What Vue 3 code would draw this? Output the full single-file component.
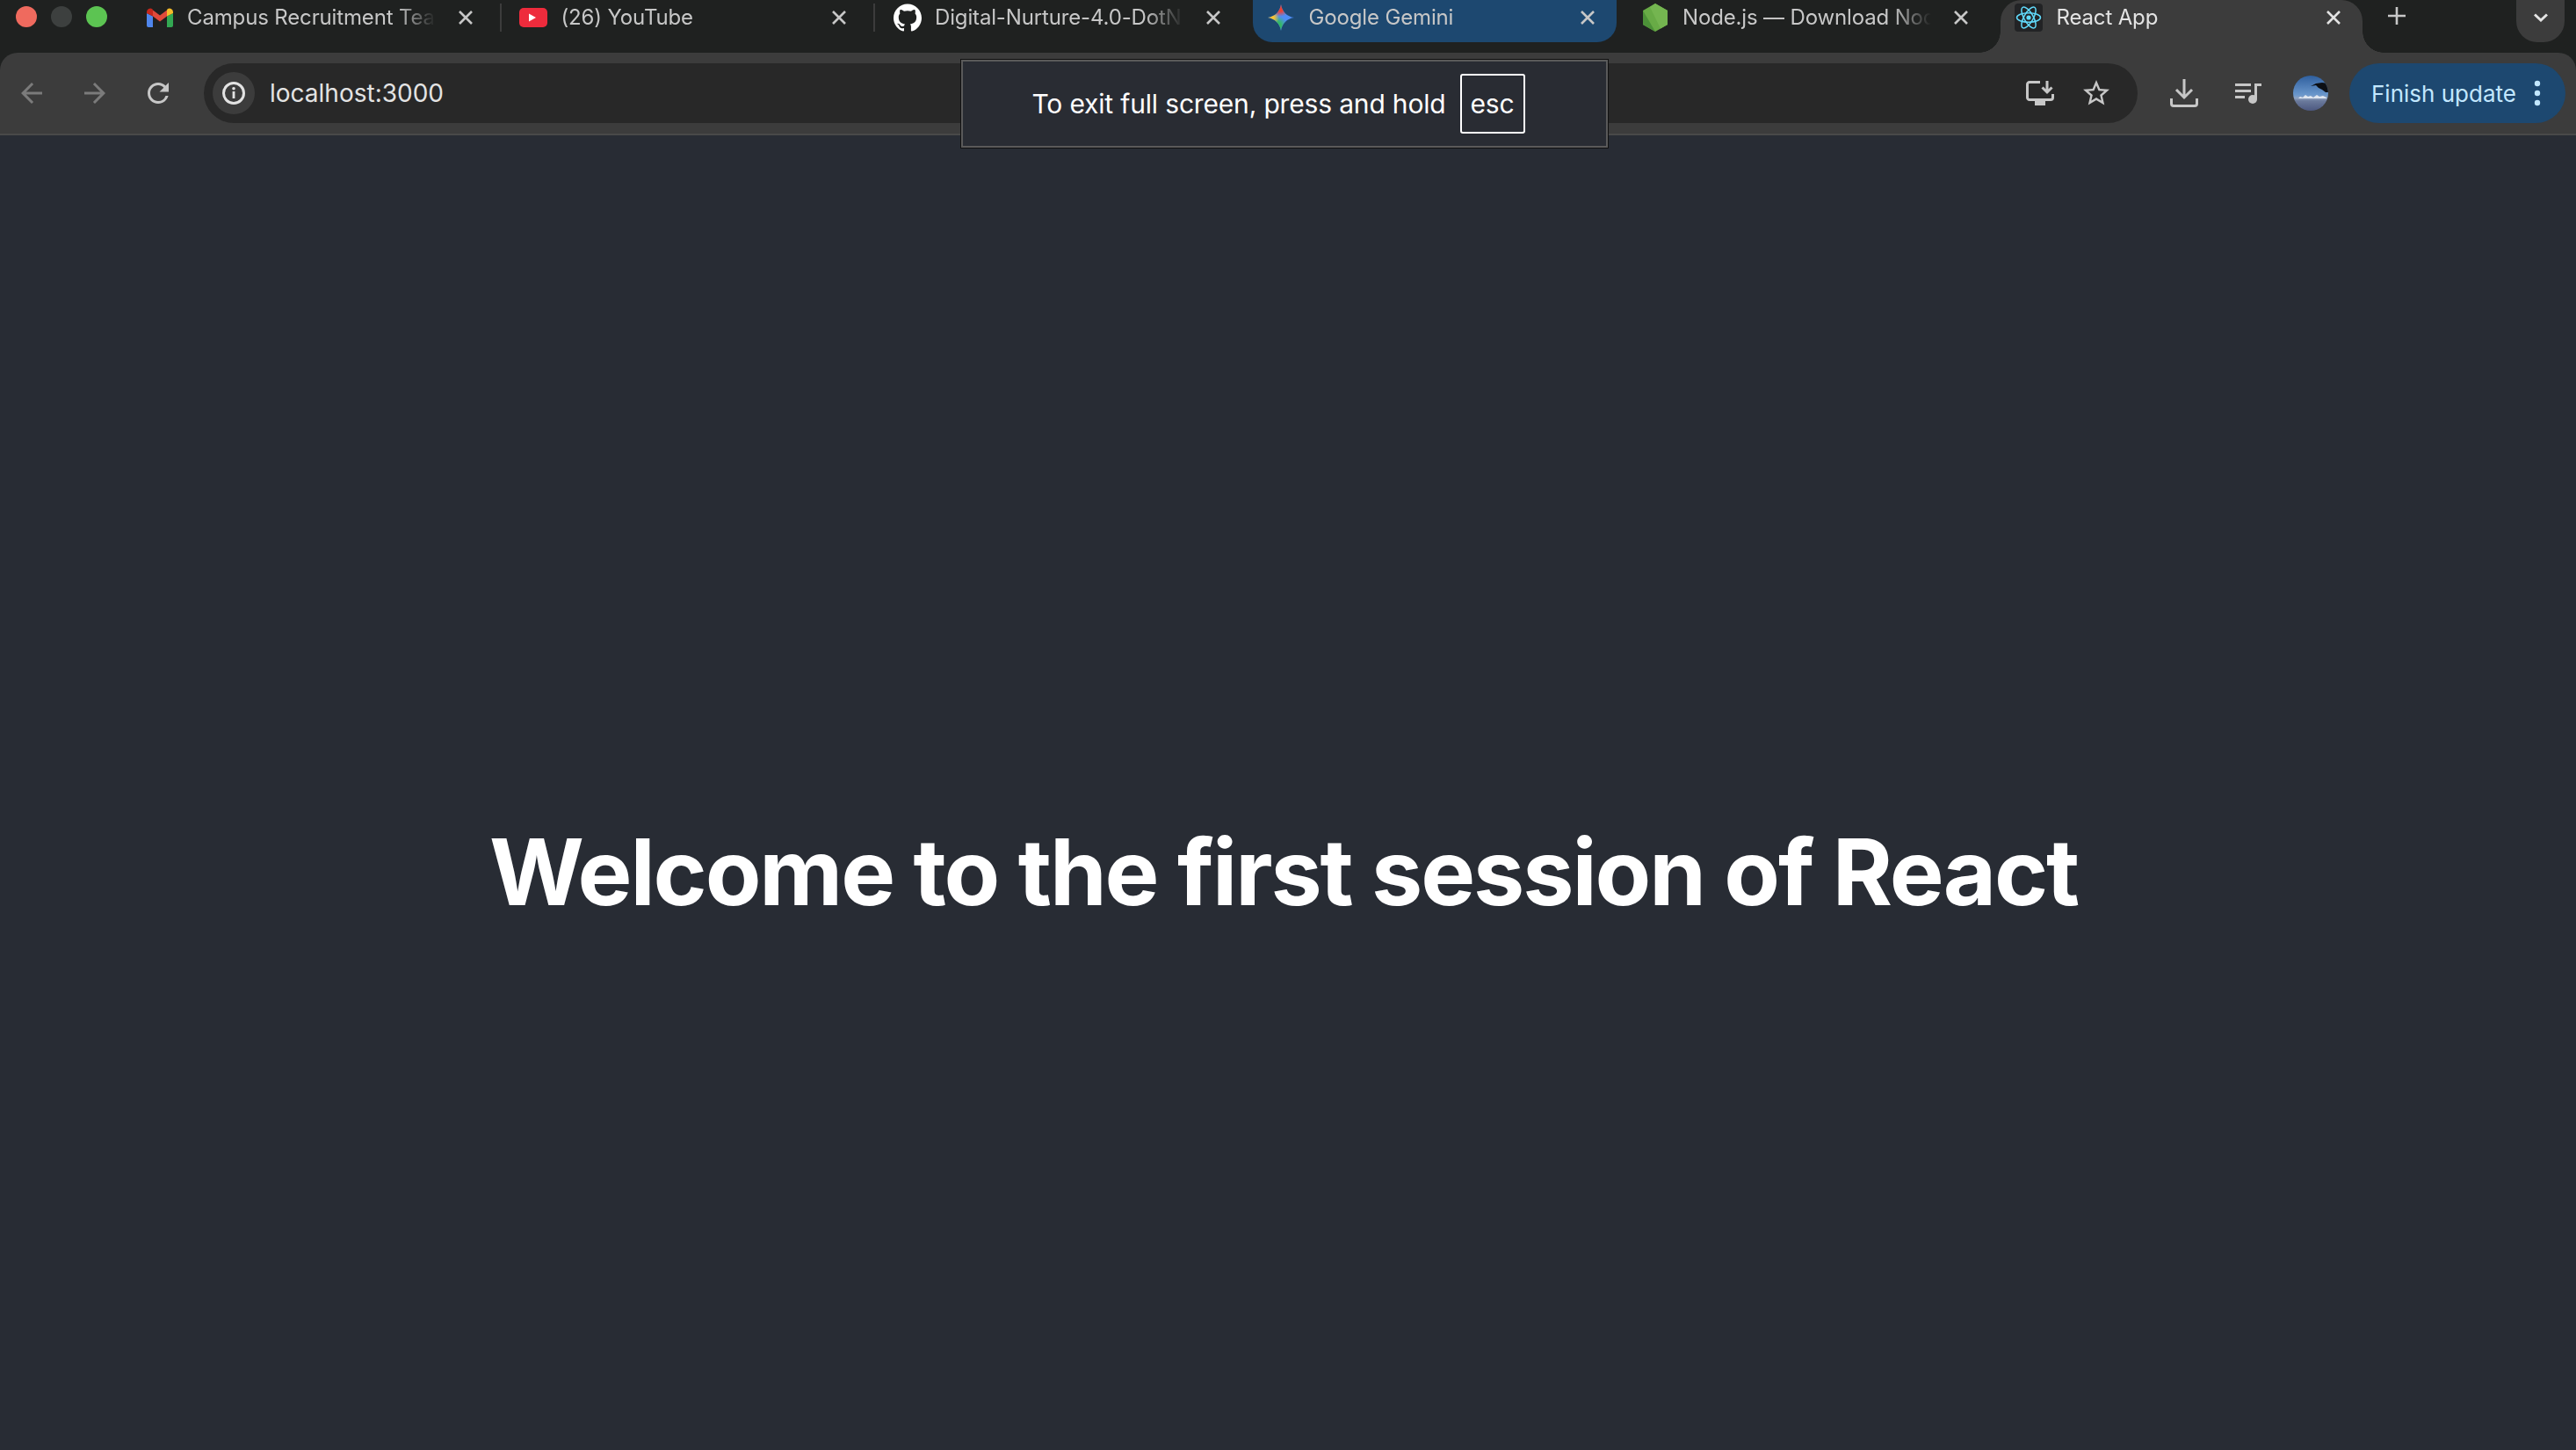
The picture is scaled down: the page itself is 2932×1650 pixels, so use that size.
<template>
  <div class="window">
    <header class="tabstrip">
      <div class="traffic">
        <span class="light red"></span>
        <span class="light grey"></span>
        <span class="light green"></span>
      </div>
      <div
        v-for="tab in tabs"
        :key="tab.title"
        class="tab"
        :class="{ highlighted: tab.kind === 'gemini', active: tab.kind === 'react', sep: tab.sep }"
      >
        <span class="favicon">
          <svg v-if="tab.kind === 'gmail'" width="30" height="22" viewBox="0 0 30 22">
            <path d="M0 6v14a2 2 0 0 0 2 2h5V9.500z" fill="#4f86ec" />
            <path d="M23 9.500V22h5a2 2 0 0 0 2-2V6z" fill="#33a852" />
            <path d="M7 9.500l8 6 8-6V2.500l-8 6-8-6z" fill="#e04a3b" />
            <path d="M0 6V4.500A4 4 0 0 1 6.400 1.300L7 2.500v7z" fill="#c5281c" />
            <path d="M23 9.500v-7l.6-1.200A4 4 0 0 1 30 4.500V6z" fill="#f6bb2a" />
          </svg>
          <svg v-else-if="tab.kind === 'youtube'" width="32" height="22" viewBox="0 0 32 22">
            <rect width="32" height="22" rx="5" fill="#ee2b3c" />
            <path d="M11 6.500l8 4.500-8 4.500z" fill="#fff" />
          </svg>
          <svg v-else-if="tab.kind === 'github'" width="32" height="32" viewBox="0 0 24 24">
            <path fill="#fff" d="M12 .297c-6.630 0-12 5.373-12 12 0 5.303 3.438 9.800 8.205 11.385.6.113.82-.258.82-.577 0-.285-.01-1.040-.015-2.040-3.338.724-4.042-1.610-4.042-1.610C4.422 18.070 3.633 17.700 3.633 17.700c-1.087-.744.084-.729.084-.729 1.205.084 1.838 1.236 1.838 1.236 1.070 1.835 2.809 1.305 3.495.998.108-.776.417-1.305.76-1.605-2.665-.3-5.466-1.332-5.466-5.930 0-1.310.465-2.380 1.235-3.220-.135-.303-.54-1.523.105-3.176 0 0 1.005-.322 3.300 1.230.96-.267 1.980-.399 3-.405 1.020.006 2.040.138 3 .405 2.280-1.552 3.285-1.230 3.285-1.230.645 1.653.24 2.873.12 3.176.765.84 1.230 1.910 1.230 3.220 0 4.610-2.805 5.625-5.475 5.920.42.36.81 1.096.81 2.220 0 1.606-.015 2.896-.015 3.286 0 .315.21.69.825.57C20.565 22.092 24 17.592 24 12.297c0-6.627-5.373-12-12-12" />
          </svg>
          <svg v-else-if="tab.kind === 'gemini'" width="32" height="32" viewBox="0 0 32 32">
            <defs>
              <clipPath id="gemStar">
                <path d="M16 1C17 9 23 15 31 16C23 17 17 23 16 31C15 23 9 17 1 16C9 15 15 9 16 1Z" />
              </clipPath>
              <radialGradient id="gemRed"><stop offset="0.45" stop-color="#ea4335" /><stop offset="1" stop-color="#ea4335" stop-opacity="0" /></radialGradient>
              <radialGradient id="gemYellow"><stop offset="0.4" stop-color="#f9c22e" /><stop offset="1" stop-color="#f9c22e" stop-opacity="0" /></radialGradient>
              <radialGradient id="gemGreen"><stop offset="0.35" stop-color="#34b864" /><stop offset="1" stop-color="#34b864" stop-opacity="0" /></radialGradient>
            </defs>
            <g clip-path="url(#gemStar)">
              <rect width="32" height="32" fill="#4f8df5" />
              <circle cx="12" cy="25" r="11" fill="url(#gemGreen)" />
              <circle cx="4" cy="16" r="10" fill="url(#gemYellow)" />
              <circle cx="15" cy="4" r="11" fill="url(#gemRed)" />
            </g>
          </svg>
          <svg v-else-if="tab.kind === 'node'" width="28" height="32" viewBox="0 0 28 32">
            <path d="M14 0l14 8v16l-14 8-14-8V8z" fill="#68ab46" />
            <path d="M0 8l14 24-14-8z" fill="#4c9138" />
            <path d="M14 0l14 8v16l-8 4.600L8 4z" fill="#74b550" />
          </svg>
          <svg v-else width="32" height="32" viewBox="0 0 32 32">
            <rect width="32" height="32" rx="4" fill="#222325" />
            <g fill="none" stroke="#61dafb" stroke-width="1.500">
              <ellipse cx="16" cy="16" rx="13.500" ry="5.200" />
              <ellipse cx="16" cy="16" rx="13.500" ry="5.200" transform="rotate(60 16 16)" />
              <ellipse cx="16" cy="16" rx="13.500" ry="5.200" transform="rotate(120 16 16)" />
            </g>
            <circle cx="16" cy="16" r="2.600" fill="#61dafb" />
          </svg>
        </span>
        <span class="tab-title">{{ tab.title }}</span>
        <svg class="tab-close" width="32" height="32" viewBox="0 0 32 32">
          <path d="M9 9l14 14M23 9L9 23" />
        </svg>
      </div>
      <svg class="new-tab" width="20" height="20" viewBox="0 0 20 20">
        <path d="M10 0v20M0 10h20" />
      </svg>
      <div class="tab-search">
        <svg width="16" height="10" viewBox="0 0 16 10">
          <path d="M1 1.500l7 6.500 7-6.500" />
        </svg>
      </div>
    </header>

    <nav class="toolbar">
      <svg class="nav-icon dim" width="36" height="36" viewBox="0 0 24 24">
        <path d="M20 11H7.830l5.590-5.590L12 4l-8 8 8 8 1.410-1.410L7.830 13H20v-2z" />
      </svg>
      <svg class="nav-icon dim" width="36" height="36" viewBox="0 0 24 24">
        <path d="M12 4l-1.410 1.410L16.170 11H4v2h12.170l-5.580 5.590L12 20l8-8z" />
      </svg>
      <svg class="nav-icon" width="36" height="36" viewBox="0 0 24 24">
        <path d="M17.650 6.350A7.958 7.958 0 0 0 12 4c-4.420 0-7.990 3.580-7.990 8s3.570 8 7.990 8c3.730 0 6.840-2.550 7.730-6h-2.080A5.990 5.990 0 0 1 12 18c-3.310 0-6-2.690-6-6s2.690-6 6-6c1.660 0 3.140.690 4.220 1.780L13 11h7V4l-2.350 2.350z" />
      </svg>

      <div class="omnibox">
        <span class="site-chip">
          <svg width="28" height="28" viewBox="0 0 28 28">
            <circle cx="14" cy="14" r="11.500" fill="none" stroke="#e3e3e3" stroke-width="3" />
            <circle cx="14" cy="8.800" r="1.800" fill="#e3e3e3" />
            <rect x="12.600" y="12" width="2.800" height="8" fill="#e3e3e3" />
          </svg>
        </span>
        <span class="url">localhost:3000</span>
        <svg class="install" width="32" height="28" viewBox="0 0 32 28" fill="none" stroke="#c7c7c7" stroke-width="3">
          <path d="M16 1.500H4a2.500 2.500 0 0 0-2.500 2.500v15A2.500 2.500 0 0 0 4 21.500h24a2.500 2.500 0 0 0 2.500-2.500v-4" />
          <path d="M24 0v12M18.500 7.500l5.500 5.500 5.500-5.500" />
          <rect x="10" y="23" width="12" height="5" fill="#c7c7c7" stroke="none" />
        </svg>
        <svg class="star" width="36" height="36" viewBox="0 0 24 24">
          <path d="M22 9.240l-7.190-.620L12 2 9.190 8.630 2 9.240l5.460 4.730L5.820 21 12 17.270 18.180 21l-1.630-7.030L22 9.240zM12 15.400l-3.760 2.270 1-4.280-3.320-2.880 4.380-.380L12 6.100l1.710 4.040 4.380.380-3.320 2.880 1 4.280L12 15.400z" />
        </svg>
      </div>

      <svg class="download" width="32" height="32" viewBox="0 0 32 32" fill="none" stroke="#c7c7c7" stroke-width="3">
        <path d="M16 0v20M7 12l9 9 9-9" />
        <path d="M1.500 22v6a2.500 2.500 0 0 0 2.500 2.500h24a2.500 2.500 0 0 0 2.500-2.500v-6" />
      </svg>
      <svg class="media" width="30" height="24" viewBox="0 0 30 24" fill="#c7c7c7">
        <rect y="1" width="18" height="3" />
        <rect y="8" width="18" height="3" />
        <rect y="15" width="11" height="3" />
        <path d="M22 1h8v3h-5v15h-3z" />
        <circle cx="20" cy="19" r="5" />
      </svg>
      <svg class="avatar" width="40" height="40" viewBox="0 0 40 40">
        <defs>
          <clipPath id="avatarClip"><circle cx="20" cy="20" r="20" /></clipPath>
          <linearGradient id="avatarSky" x1="0" y1="0" x2="0" y2="1">
            <stop offset="0" stop-color="#2f5f9e" />
            <stop offset="0.55" stop-color="#6a97cc" />
            <stop offset="0.64" stop-color="#8fa3c2" />
            <stop offset="0.72" stop-color="#6b7a9c" />
            <stop offset="1" stop-color="#4c5880" />
          </linearGradient>
        </defs>
        <g clip-path="url(#avatarClip)">
          <rect width="40" height="40" fill="url(#avatarSky)" />
          <path d="M6 26l2-2 3 1 3-3 3 2 3-1 3 2 4-3 3 2 4-1 4 2v1H6z" fill="#dfe6f0" />
          <path d="M20 12l6-3 7-1 7 1v10l-3 0-4-3-4-2-3-3z" fill="#0c0f14" />
        </g>
      </svg>
      <div class="update-pill">
        <span>Finish update</span>
        <svg width="8" height="30" viewBox="0 0 8 30" fill="#c2e7ff">
          <circle cx="4" cy="4" r="3.200" />
          <circle cx="4" cy="15" r="3.200" />
          <circle cx="4" cy="26" r="3.200" />
        </svg>
      </div>
    </nav>

    <main class="page">
      <h1>Welcome to the first session of React</h1>
    </main>

    <div class="fullscreen-toast">
      <span>To exit full screen, press and hold</span>
      <kbd>esc</kbd>
    </div>
  </div>
</template>

<script setup>
const tabs = [
  { kind: 'gmail', title: 'Campus Recruitment Tea', sep: true },
  { kind: 'youtube', title: '(26) YouTube', sep: true },
  { kind: 'github', title: 'Digital-Nurture-4.0-DotN' },
  { kind: 'gemini', title: 'Google Gemini' },
  { kind: 'node', title: 'Node.js — Download Nod' },
  { kind: 'react', title: 'React App' }
]
</script>

<style>
html, body {
  margin: 0;
  background: #282c34;
}
</style>

<style scoped>
.window {
  position: relative;
  width: 2932px;
  height: 1650px;
  display: flex;
  flex-direction: column;
  overflow: hidden;
  background: #1f2120;
  font-family: Inter, "Liberation Sans", sans-serif;
}

/* tab strip */
.tabstrip {
  height: 60px;
  flex: none;
  display: flex;
  align-items: flex-start;
}
.traffic {
  width: 149.500px;
  height: 38px;
  flex: none;
  display: flex;
  align-items: center;
  gap: 16px;
  padding-left: 18px;
  box-sizing: border-box;
}
.light {
  width: 24px;
  height: 24px;
  border-radius: 50%;
}
.light.red { background: #ef6a5e; }
.light.grey { background: #3d403f; }
.light.green { background: #5cc452; }

.tab {
  position: relative;
  width: 413px;
  height: 48px;
  margin-right: 12.500px;
  flex: none;
  display: flex;
  align-items: center;
  box-sizing: border-box;
  padding: 0 17px 8px 16px;
  color: #c7c7c7;
  font-size: 24px;
  letter-spacing: -0.15px;
  border-radius: 0 0 22px 22px;
}
.tab.sep::after {
  content: "";
  position: absolute;
  top: 4px;
  right: -8px;
  width: 2px;
  height: 32px;
  background: #3c3c3c;
}
.tab.highlighted {
  width: 414px;
  margin-right: 11.500px;
  background: #1d4870;
}
.tab.active {
  height: 60px;
  width: 412px;
  padding-bottom: 20px;
  margin-right: 0;
  background: #3c3c3c;
  color: #e3e3e3;
  border-radius: 24px 24px 0 0;
}
.tab.active::before,
.tab.active::after {
  content: "";
  position: absolute;
  bottom: 0;
  width: 24px;
  height: 24px;
}
.tab.active::before {
  left: -24px;
  background: radial-gradient(circle at 0 0, transparent 23.500px, #3c3c3c 24px);
}
.tab.active::after {
  right: -24px;
  background: radial-gradient(circle at 100% 0, transparent 23.500px, #3c3c3c 24px);
}
.favicon {
  width: 32px;
  height: 32px;
  flex: none;
  display: flex;
  align-items: center;
  justify-content: center;
  margin-right: 15.500px;
}
.tab-title {
  flex: 1;
  min-width: 0;
  margin-right: 12px;
  padding-bottom: 2px;
  white-space: nowrap;
  overflow: hidden;
  -webkit-mask-image: linear-gradient(to right, #000 calc(100% - 50px), transparent calc(100% - 6px));
  mask-image: linear-gradient(to right, #000 calc(100% - 50px), transparent calc(100% - 6px));
}
.tab-close {
  flex: none;
  fill: none;
  stroke: #c7c7c7;
  stroke-width: 2.600;
}
.tab.active .tab-close {
  stroke: #e3e3e3;
}
.new-tab {
  flex: none;
  margin: 8px 0 0 29px;
  fill: none;
  stroke: #c7c7c7;
  stroke-width: 2.600;
}
.tab-search {
  width: 55px;
  height: 48px;
  flex: none;
  margin-left: auto;
  margin-right: 13px;
  display: flex;
  align-items: center;
  justify-content: center;
  box-sizing: border-box;
  padding-bottom: 8px;
  background: #3c3c3c;
  border-radius: 0 0 24px 24px;
}
.tab-search svg {
  fill: none;
  stroke: #e3e3e3;
  stroke-width: 3;
}

/* toolbar */
.toolbar {
  height: 94px;
  flex: none;
  display: flex;
  align-items: center;
  box-sizing: border-box;
  padding: 0 12px 0 18px;
  background: #3c3c3c;
  border-bottom: 2px solid #494949;
  border-radius: 20px 20px 0 0;
}
.nav-icon {
  flex: none;
  margin-right: 36px;
  fill: #c7c7c7;
}
.nav-icon.dim {
  fill: #7b7b7b;
}
.nav-icon:nth-child(3) {
  margin-right: 34px;
}
.omnibox {
  flex: 1;
  height: 68px;
  display: flex;
  align-items: center;
  padding: 0 29px 0 10px;
  background: #282828;
  border-radius: 34px;
}
.site-chip {
  width: 48px;
  height: 48px;
  flex: none;
  display: flex;
  align-items: center;
  justify-content: center;
  border-radius: 50%;
  background: #3c3c3c;
}
.url {
  flex: 1;
  margin-left: 17px;
  color: #e3e3e3;
  font-size: 28px;
}
.install {
  flex: none;
  margin-right: 30px;
}
.star {
  flex: none;
  fill: #c7c7c7;
}
.download {
  flex: none;
  margin-left: 37px;
}
.media {
  flex: none;
  margin-left: 42px;
}
.avatar {
  flex: none;
  margin-left: 36px;
}
.update-pill {
  width: 246px;
  height: 68px;
  flex: none;
  margin-left: 24px;
  display: flex;
  align-items: center;
  justify-content: space-between;
  box-sizing: border-box;
  padding: 0 28px 0 25px;
  background: #1d4870;
  border-radius: 34px;
  color: #c2e7ff;
  font-size: 26px;
}

/* page */
.page {
  flex: 1;
  display: flex;
  align-items: center;
  justify-content: center;
  box-sizing: border-box;
  padding: 180px 10px 0 0;
  background: #282c34;
}
.page h1 {
  margin: 0;
  color: #fff;
  font-size: 104px;
  font-weight: 700;
  letter-spacing: -2.1px;
  line-height: 1.2;
  white-space: nowrap;
}

.fullscreen-toast {
  position: absolute;
  left: 1094px;
  top: 68px;
  width: 736px;
  height: 100px;
  display: flex;
  align-items: center;
  justify-content: center;
  gap: 16px;
  box-sizing: border-box;
  padding-right: 14px;
  background: #292c33;
  border: 2px solid #5a5a5a;
  box-shadow: 0 0 0 1px #111;
  color: #fff;
  font-size: 30px;
  letter-spacing: -0.17px;
}
.fullscreen-toast kbd {
  width: 74px;
  height: 68px;
  display: flex;
  align-items: center;
  justify-content: center;
  box-sizing: border-box;
  border: 2px solid #fff;
  border-radius: 3px;
  font-family: inherit;
}
</style>
